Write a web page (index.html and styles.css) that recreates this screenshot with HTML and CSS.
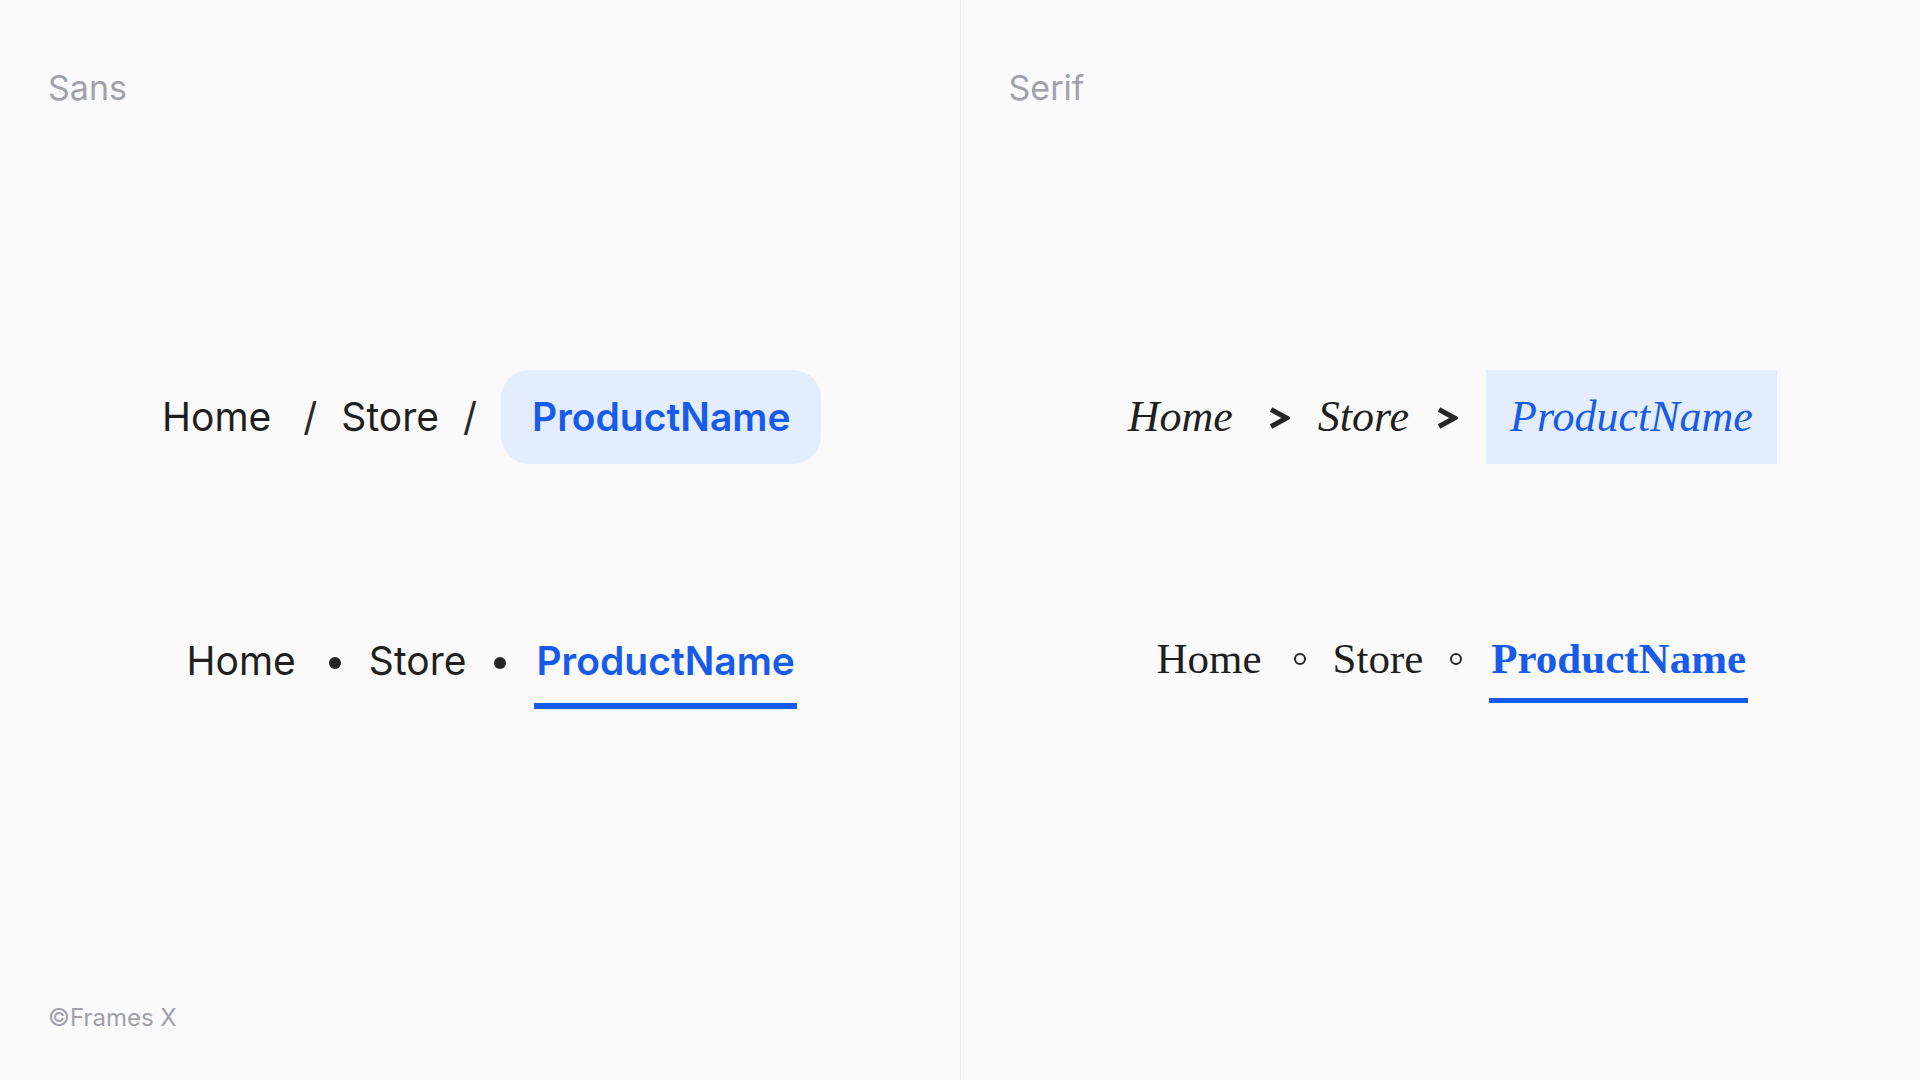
FILE: index.html
```html
<!DOCTYPE html>
<html lang="en">
<head>
<meta charset="utf-8">
<title>Breadcrumbs</title>
<link rel="stylesheet" href="styles.css">
</head>
<body>
<main class="page">
  <section class="panel panel-sans">
    <h2 class="label">Sans</h2>
    <div class="stage">
      <nav class="crumbs crumbs-pill">
        <span class="item first">Home</span>
        <span class="sep slash">/</span>
        <span class="item">Store</span>
        <span class="sep slash">/</span>
        <span class="item current pill">ProductName</span>
      </nav>
      <nav class="crumbs crumbs-line">
        <span class="item first">Home</span>
        <span class="sep dot"></span>
        <span class="item">Store</span>
        <span class="sep dot"></span>
        <span class="item current underline">ProductName</span>
      </nav>
    </div>
    <footer class="footer">©Frames X</footer>
  </section>
  <section class="panel panel-serif">
    <h2 class="label">Serif</h2>
    <div class="stage">
      <nav class="crumbs crumbs-pill">
        <span class="item first italic">Home</span>
        <span class="sep chev"><svg width="21" height="22" viewBox="0 0 21 22"><polyline points="2,2.5 17.5,11 2,19.5" fill="none" stroke="#262626" stroke-width="5" stroke-linejoin="miter"/></svg></span>
        <span class="item italic">Store</span>
        <span class="sep chev"><svg width="21" height="22" viewBox="0 0 21 22"><polyline points="2,2.5 17.5,11 2,19.5" fill="none" stroke="#262626" stroke-width="5" stroke-linejoin="miter"/></svg></span>
        <span class="item current box italic">ProductName</span>
      </nav>
      <nav class="crumbs crumbs-line">
        <span class="item first">Home</span>
        <span class="sep ring"></span>
        <span class="item">Store</span>
        <span class="sep ring"></span>
        <span class="item current underline bold">ProductName</span>
      </nav>
    </div>
  </section>
</main>
</body>
</html>
```
FILE: styles.css
```css
* { box-sizing: border-box; }
html, body { margin: 0; padding: 0; }
body {
  background: #fafafa;
  font-family: Inter, "Noto Sans", sans-serif;
  color: #1f1f1f;
}
.page {
  display: flex;
  width: 1920px;
  height: 1080px;
}
.panel {
  flex: 1 1 0;
  display: flex;
  flex-direction: column;
  padding: 66px 24px 48px 48px;
}
.panel-sans {
  border-right: 1px solid #ececee;
}
.label {
  margin: 0;
  font-size: 34px;
  line-height: 44px;
  font-weight: 400;
  color: #a1a1aa;
}
.stage {
  margin-top: 260px;
  display: flex;
  flex-direction: column;
}
.crumbs {
  display: flex;
  align-items: center;
  justify-content: center;
  gap: 22px;
  font-size: 39px;
  line-height: 48px;
}
.crumbs .first { margin-right: 8px; }
.crumbs-line {
  margin-top: 173px;
  align-items: flex-start;
  gap: 24px;
}
.crumbs-line .first { margin-right: 5px; }
.item { white-space: nowrap; }
.current { color: #175bea; font-weight: 600; }
.pill {
  background: #e3edfe;
  border-radius: 28px;
  padding: 23px 31px;
}
.underline {
  padding: 0 2px 18px;
  border-bottom: 6px solid #175bea;
}
.sep { color: #262626; }
.slash { padding: 0 2px; }
.dot {
  width: 12px;
  height: 12px;
  border-radius: 50%;
  background: #262626;
  margin: 20px 4px 0;
}
.panel-serif .crumbs {
  font-family: "Liberation Serif", "DejaVu Serif", serif;
  font-size: 43px;
  gap: 24px;
}
.panel-serif .crumbs-pill { font-size: 44px; }
.italic { font-style: italic; }
.panel-serif .current { font-weight: 400; }
.panel-serif .current.bold { font-weight: 700; }
.box {
  background: #e3edfe;
  padding: 23px 24px;
}
.chev {
  display: flex;
  margin: 2px 4px 0;
}
.panel-serif .crumbs-line { margin-top: 171px; }
.panel-serif .crumbs-line .first { margin-right: 5px; }
.panel-serif .underline {
  padding: 0 2px 15px;
  border-bottom-width: 5px;
}
.ring {
  width: 12px;
  height: 12px;
  border-radius: 50%;
  border: 2px solid #262626;
  margin: 18px 3px 0;
}
.footer {
  margin-top: auto;
  font-size: 24px;
  line-height: 29px;
  color: #a1a1aa;
}
```
